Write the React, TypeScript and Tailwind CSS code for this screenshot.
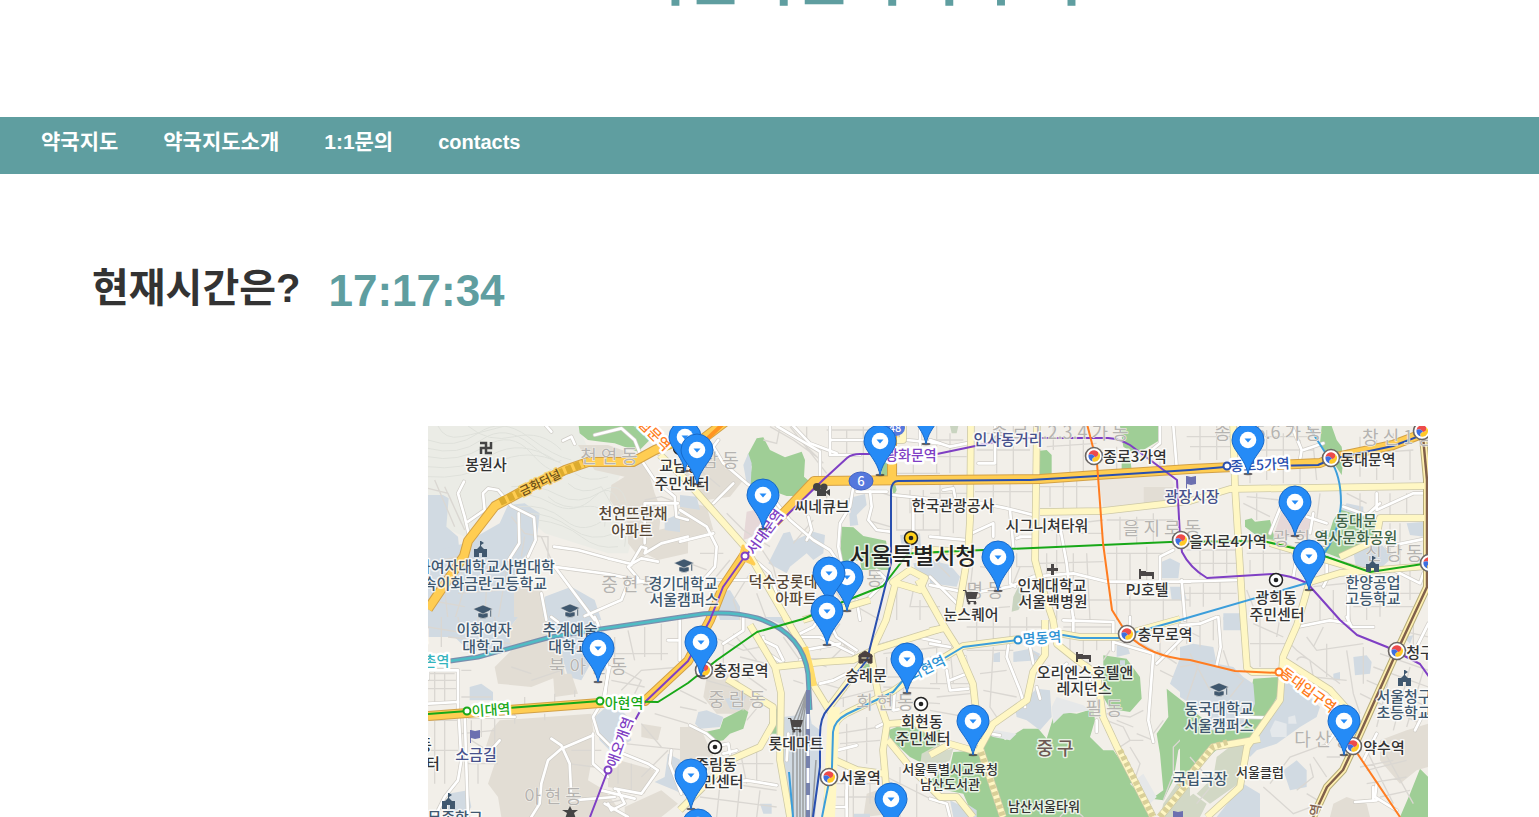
import React from 'react';

type Tile = {
  x: number;
  y: number;
  areas: [string, string][];
  lanes: string[];
  streets: string[];
};

const GREEN = '#9fce96';
const WATER = '#d1dae2';
const BLOCK = '#e2ddd4';
const HILL = '#ebece6';

const contours = [
  'M0 60Q80 90 150 40T300 50T430 120M0 110Q90 130 170 80T310 100T410 150M0 170Q100 180 200 130T400 130',
  'M240 230Q300 210 370 250T500 230T590 300M270 260Q350 250 410 300T540 290T590 380M330 300Q410 310 460 350T570 380',
  'M30 18Q50 60 100 50T230 18M420 190Q460 230 520 200L560 270M360 230Q400 270 470 260T530 320M0 85Q90 110 160 60T310 75T400 120M0 140Q100 155 190 105T380 120',
  'M300 280Q370 280 430 325T560 340M250 200Q330 190 390 225T520 215T600 280M440 160Q480 190 540 170M120 18Q180 70 260 50T400 90',
];

const tiles: Tile[] = [
  {
    x: 428,
    y: 420,
    areas: [
      [HILL, 'M0 18H450L500 130L580 160L560 200L600 260L620 330L600 400L540 400L350 340L240 240L110 350L0 300Z'],
      [BLOCK, 'M450 75L540 75L640 110L660 150L680 220L700 270L690 360L640 420L600 370L600 310L545 240L550 195L590 170L500 150Z'],
      [BLOCK, 'M690 330L780 310V400L690 420L650 400ZM255 500L340 500L360 600H255Z'],
      [GREEN, 'M452 18H680L665 60L630 95L560 70L520 65L480 60L455 40Z'],
      [WATER, 'M0 225H45L62 235L55 320L90 350L95 400H0Z'],
      [WATER, 'M240 255L290 250L335 280L325 370L305 395L270 430L258 520V600H0V400L110 370L215 310Z'],
      [WATER, 'M350 530L430 500L500 540L520 600H345ZM710 300L780 270V340L710 330Z'],
    ],
    lanes: [
      'M0 205L60 220L100 310M20 180L80 320M50 200L110 330M250 290L290 340L340 350L370 420M290 350L280 410M320 350L360 350V420',
      'M0 430L90 410L110 500L80 600M40 420L60 600M90 520L220 510M180 420L170 600M0 540L110 560M240 420L210 600',
      'M700 30L680 100L720 120M650 240L700 230L780 260',
    ],
    streets: [
      'M108 185L90 220L110 290L125 355', 'M120 305L170 270L165 220L180 205L210 210L250 258L318 292L323 360L300 410', 'M272 280L274 370L242 420',
      'M378 380L450 390L540 415L610 432L640 415L690 425', 'M610 435L600 440L630 475', 'M375 440L540 462L650 485', 'M380 440L440 520L500 600',
      'M470 588L580 540L600 490L650 485', 'M340 520L355 600', 'M405 62L430 50L440 72', 'M640 120L680 180L740 230L745 290L780 300', 'M610 430L640 380L655 385L650 400L700 370L780 350',
      'M650 370V250L750 250', 'M355 18L370 35', 'M500 45L580 25L620 60L640 110',
    ],
  },
  {
    x: 680,
    y: 420,
    areas: [
      [BLOCK, 'M0 90L100 100L190 180L150 230L80 240L0 170ZM0 240L80 260L100 330L0 370Z'],
      [GREEN, 'M230 55L250 52L270 90L315 112L365 95L375 120L372 170L390 185L340 228L320 228L270 210L208 200L215 140L203 105Z'],
      [GREEN, 'M485 320L520 322L550 348L618 362L632 450L545 450L540 420L480 430ZM604 60H625V168H604ZM635 190H645L650 210L640 230Z'],
      ['#e6d8d8', 'M200 275L245 265L250 340L190 360Z'],
      [WATER, 'M205 100L190 135L200 190L212 200L215 130ZM265 430L310 340L330 335L340 362L400 335L435 345L430 400L400 420L380 400L330 440L320 460ZM505 235L555 222L560 255L530 285L535 315L510 318ZM660 345L720 340L725 400L670 410ZM100 520L150 510L180 560L180 600H120ZM0 225L50 230L60 270L0 260ZM700 430L780 420V470L710 470Z'],
    ],
    lanes: [
      'M270 20L340 60L410 110M330 20L440 160M300 18L290 70L250 60M380 20V80L430 130M450 60H600M440 30H600M500 30V110M550 20V160',
      'M140 280L190 330L270 380M240 380L280 440L300 520M400 300L340 370M440 220V260L500 250M580 210L640 230M560 300L630 320',
      'M650 230V330H780M690 210V280M730 210V330M400 450L480 470M440 470L490 550M650 500V600M700 510L690 560H780M720 540V600M530 560L600 600M650 120V160H780M700 110V160M0 100L120 200M0 420L80 450',
      'M130 400L60 400M150 420L100 480M210 460L160 540L180 600M230 520L260 600',
    ],
    streets: [
      'M290 18L420 95V180', 'M340 18L390 70L470 100', 'M450 18V60H600M450 60V105H540', 'M115 60L100 80L130 130L200 190L290 250L330 300L400 360L450 390L470 420',
      'M160 190L100 250', 'M0 270L80 320L110 380L105 440L70 480M100 340L0 365', 'M520 200L510 260L480 310L475 380L495 480', 'M530 215H620', 'M570 215L575 260L565 300L590 330L630 335',
      'M385 290L395 330L380 360', 'M110 480H210', 'M230 425L270 460L290 520', 'M680 60L780 70', 'M640 225L780 240M700 240V330', 'M720 80V18', 'M590 450L620 480L550 550', 'M530 540L540 600',
    ],
  },
  {
    x: 930,
    y: 420,
    areas: [
      [BLOCK, 'M640 200H730V250H640Z'],
      ['#ebe7e0', 'M505 180L720 165L735 200H640V250L520 262Z'],
      [GREEN, 'M570 18H690V60L640 90L610 100L580 80ZM330 92L350 90L365 105V165H330ZM575 110L600 110L605 150H575Z'],
      ['#c9d4c0', 'M265 500L290 530L265 570L245 575L250 530ZM60 18H85L80 40H65Z'],
      [WATER, 'M0 420L60 435L90 470L80 500L0 490ZM685 430L720 415L750 430L745 475L690 475ZM720 500L760 500L770 540L725 540Z'],
    ],
    lanes: [
      'M20 18V160M60 40V160M100 60H0M0 110H110M150 40H300M140 90H300M200 18V160M250 18V170M350 80L500 70M370 18V90M420 60V170M460 60V170M560 80V150M690 100V150',
      'M0 220H110M30 195V350M70 195V340M135 215H310M190 195V280M240 190V300M330 200H500M360 200V260M400 180V270M440 180V270M530 300H730M570 290V360M620 290V370M670 280V365',
      'M10 420L60 470M130 420L120 510M150 440L240 450M260 400V440H310M350 400V480M380 390V600M430 400V600M470 400L480 600M530 400H700M560 380V600M600 400V600M650 380V500M330 430L520 425M330 540H540M700 500V600M550 540H780M120 570L240 560',
      'M340 330H410M380 310V380M440 310L520 300M450 340H520M270 440L250 490L280 500',
    ],
    streets: [
      'M0 60L60 80L110 70', 'M195 18V130L145 130', 'M130 245L230 265L310 285', 'M125 340L190 310V350', 'M240 270L250 380', 'M40 210L70 205L75 230',
      'M270 350H310M275 350L260 355', 'M390 320L410 430L430 600', 'M0 350L110 360', 'M0 495L120 520L240 500L310 470L430 460L530 485L780 485', 'M240 400L240 490L255 500', 'M690 480V410L730 390', 'M730 18L740 140M690 18V70L640 110', 'M755 480L765 600', 'M0 470L90 560',
    ],
  },
  {
    x: 1180,
    y: 420,
    areas: [
      [GREEN, 'M425 18H455L470 60L485 80L490 120L485 165L465 135L440 100L420 70ZM195 300L215 295L225 305L270 300L285 360L240 355L195 320ZM460 300L480 270L520 265L560 290L600 300L590 350L560 370L540 400L480 415L430 395Z'],
      ['#e6d8d8', 'M305 275L350 265L395 300L380 350L280 350Z'],
      [WATER, 'M485 270L500 250L550 260L550 290ZM520 395L600 370L640 410L590 455H530ZM680 310L735 305V350L690 345ZM130 580H180V600H130ZM0 490L10 490V540H0Z'],
      [BLOCK, 'M320 230L340 230V260H320Z'],
    ],
    lanes: [
      'M20 50H150M30 80H150M60 18V120M110 18V120M190 50H400M190 90H400M210 30V190M260 30V180M310 40V190M360 60V190M400 80L410 180M500 90L560 100L700 90M540 50V170M590 60V180M640 40V180M690 90V180',
      'M200 230L300 240M230 220V300M190 250L270 290M420 220L410 300M500 220L560 250M540 220V280M630 220V290M680 220V280M630 310V400M660 310V450',
      'M20 390H170M30 430H170M60 380V470M100 380V465M140 380V460M200 400H330M210 420V460M250 380V460M300 390V450M30 500V560M70 490V560M120 480V540M0 520H170M200 510L220 560M400 500L500 490L510 600M560 470V600M600 460V590M650 460V560M690 450V540M560 520H720M520 560H700M420 540V600M460 510V600',
    ],
    streets: [
      'M335 18L365 90L360 120', 'M370 90L430 70', 'M310 240L270 340', 'M440 410L440 480L430 500', 'M400 280L390 340M380 290L440 310', 'M590 220L590 270L700 220L740 220', 'M620 380L740 355', 'M0 485L180 480', 'M505 480V600', 'M640 450L720 490L730 460',
      'M340 470L350 410L330 390', 'M490 260L560 285L600 250', 'M735 18V60',
    ],
  },
  {
    x: 428,
    y: 617,
    areas: [
      [WATER, 'M0 0H270L240 40L250 90L220 110L120 100L80 60L0 60ZM345 0H500L510 100L460 190L420 180L400 110L350 60ZM305 160L350 135L375 150L370 180L310 190ZM125 210L160 200L195 225L195 250H125ZM500 300L540 265L580 280L600 300L610 370L550 405L515 370ZM215 440L240 430L285 445L280 470L225 485ZM60 530L120 520L130 570L110 600H60ZM720 410L780 440V540L740 520L680 495L710 480Z'],
      [BLOCK, 'M270 0H350L400 80L410 170L310 210L210 200L200 150L250 100L240 40ZM375 170L430 170L450 230L380 240ZM215 310L490 290L500 380L480 490L530 520L590 600H220L210 540L180 500L200 440L170 400L190 340ZM640 320L700 330L690 370L640 360ZM540 420L680 460L650 530L540 510ZM590 570L700 520L750 560L700 600H590Z'],
    ],
    lanes: [
      'M0 30L120 50M40 0V90M90 0L100 60M150 0V60M60 60L250 80M200 0L210 80M0 170H80M0 190H90M0 215H90M20 160V260M50 170V260M100 240H190M100 160H130M310 190L400 160M250 150L310 170',
      'M560 60V150M600 40L620 130M650 30V120M700 20V130M550 110H720M560 150L640 190L620 230M550 190L650 210M580 220L640 160L760 150M130 310V360M160 300V360M200 300V380M100 350L200 340M260 290V320M350 290V310M440 220V240M290 240V270M380 230V260',
      'M0 310H90M20 310V500M50 300V500M0 400H90M130 370L210 420M120 440H210M150 400V500M430 400H520M420 440L500 450M570 420V500M610 440V530M530 560L620 540M640 480L720 400M590 380L780 400M680 290L780 320M640 320L700 390',
    ],
    streets: [
      'M0 185V160H90V290M110 290L120 600', 'M92 290L100 430L90 490L50 540L20 600', 'M0 260L90 255', 'M500 0L510 20L540 160L530 250', 'M545 150L525 250L495 300L510 350L560 400L660 440L690 460L640 530L560 515', 'M370 365L400 385L425 440L430 540',
      'M495 355L400 395L360 430L340 500L335 560L310 600', 'M495 350L495 440L540 480', 'M430 550L560 540', 'M215 370L180 410', 'M125 300H260', 'M570 520L590 560L550 580L540 560', 'M520 520L620 545', 'M755 0V130', 'M720 70H750', 'M730 400L725 440L760 530', 'M370 0L390 15M530 560L600 600',
    ],
  },
  {
    x: 680,
    y: 617,
    areas: [
      [BLOCK, 'M80 180L160 170L220 250L200 290L110 290L70 240ZM0 330L60 330L110 440L60 480L0 440ZM560 530L620 510L640 590L550 600Z'],
      [GREEN, 'M75 345L120 335L130 305L190 275L205 285L190 335L150 350L130 370L100 375ZM285 275H290L290 350L255 350ZM625 340L650 330L780 335V410L730 440L690 420L630 365ZM535 140H572V160L545 155Z'],
      [WATER, 'M55 285L80 280L130 300L120 330L60 335L45 320ZM135 245L200 235L180 280L150 275ZM310 300L350 295L380 230L395 320L420 340V450L405 600H330L310 470ZM250 0H330L350 40ZM520 590H570V600H520ZM240 560H275V590H250Z'],
      ['#d4dac8', 'M725 410L780 380V480L720 450Z'],
    ],
    lanes: [
      'M100 60L190 100L240 90M180 120L260 140M130 80V150M160 50L230 130M80 190L220 230M190 170L260 220M250 250L200 310M170 200L190 280M0 220L80 260M0 270L50 280',
      'M310 60L360 130M340 190L370 200M440 30L520 110M480 20L420 100M500 80L450 130M390 130L440 150M430 200L500 220M460 250L580 220M490 240V270M540 240V270M590 180H700M620 120V180M670 130V230M610 110L780 90M610 210L780 215M630 250L780 260',
      'M470 350L600 330M480 380L600 370M500 320V440M560 300V440M460 500H600M470 540H600M520 460V600M570 460V560M170 440L280 440M180 400L200 500M230 400V500M80 490L290 520M60 540L290 570M120 500L110 600M180 500L170 600M240 520L230 600M620 480L780 560M660 450V600M710 500V600',
    ],
    streets: [
      'M190 0V40L130 80', 'M240 65L290 90L310 130', 'M330 40L360 60L420 60L520 110', 'M340 60L400 30L420 0M440 0L470 60L530 100', 'M370 100L480 80', 'M360 130H440', 'M420 200L460 190L520 160', 'M30 325L80 350L120 385L145 380L150 410', 'M130 410L170 400', 'M120 500L200 490L290 505', 'M260 110L290 170', 'M250 60V100L310 140', 'M470 400L530 385', 'M600 85L700 58L780 75', 'M590 330L610 320', 'M450 570H500V460', 'M500 600V520', 'M645 215L640 280L690 270',
      'M320 430L325 350',
    ],
  },
  {
    x: 930,
    y: 617,
    areas: [
      [GREEN, 'M175 350L210 350L225 370L280 335L325 335L350 365L370 300L400 285L440 290L490 275L495 310L480 360L520 400L550 400L620 500L660 600H210L170 450L160 380ZM520 115L590 125L630 180L635 245L600 285L540 275L520 240ZM710 215L780 270V360L745 400L730 490L700 550L665 545L700 520L690 410L680 350L715 300ZM70 405L160 400L225 600H130L100 530L0 510V490L60 450Z'],
      ['#d4dac8', 'M0 410L70 395L60 430L0 470Z'],
      ['#d2d8c5', 'M740 500L780 480V600H690L700 560Z'],
      [WATER, 'M250 105L300 95L330 110L325 130L250 135ZM190 110L210 105V135H190ZM255 275L320 215L360 220L365 300L330 340L290 310L260 300ZM560 85L590 80L600 110L560 120ZM720 200L755 110L780 100V250ZM110 560L140 580V600H100ZM60 550L100 570L110 600H70ZM570 130H585V145H570Z'],
      ['#e6e8e9', 'M600 500L640 470L680 540L660 560ZM365 270L380 240L460 265L480 280L400 290L370 320ZM170 350L200 340L260 350L240 370L190 360Z'],
    ],
    lanes: [
      'M0 120L60 130M20 90V200M60 90L70 200M110 100H250M190 90L180 270L200 300M150 170L230 160M160 220L260 240M110 30H350M140 0V80M190 0V70M240 0V70M290 0V60M300 100L340 130M400 30H550M420 60V100M460 60V110M500 60V100M540 100L520 130',
      'M530 290L600 300L640 280M530 310L580 330L600 370L640 370M560 310L610 330M600 370L570 390M620 350L670 370M680 100L740 140M690 160L730 180M600 60L670 100M640 60H780M690 50V120M740 40V100M670 350L700 310M600 390L630 440L610 500M0 200H120M20 240L120 230M0 280L110 300',
      'M390 600Q420 560 460 600M780 340L730 390L730 470L700 550',
    ],
    streets: [
      'M235 85L230 120L270 220L285 270', 'M300 90L310 140', 'M50 160L60 220L115 215', 'M60 190L110 170L105 120', 'M0 80L60 90', 'M430 0V60', 'M400 10L550 15V100', 'M550 75L670 110L655 310L670 375', 'M780 40L680 140M600 0V40', 'M410 140L380 165L370 175', 'M350 150L410 165', 'M320 210L330 245', 'M500 310L500 345', 'M0 545L50 560L60 600', 'M480 190V150L470 140', 'M180 350L210 355',
    ],
  },
  {
    x: 1180,
    y: 617,
    areas: [
      [GREEN, 'M220 185L300 180L295 250L230 380L130 380L30 470L0 500V250L100 330L200 290L210 240ZM720 455L745 480V600H660L690 530Z'],
      ['#d2d8c5', 'M110 420L175 370L200 395L175 500L90 560L50 530L100 480ZM0 560L40 530L80 560L60 600H0Z'],
      [WATER, 'M130 0H185V40H130ZM0 90L40 80L100 90L110 140L160 150L190 180L220 200L225 260L190 340L90 340L80 290L0 240ZM520 120L560 115L575 135L570 170L525 175ZM285 250L320 180L380 230L420 270L410 300L360 330L290 380L230 400L210 420L200 410ZM310 460L350 430L380 460V510L330 520ZM190 500L240 530L240 600H110L150 550ZM670 60L700 55L690 80ZM460 170L480 165L480 190H460Z'],
      [BLOCK, 'M600 370L680 340L745 320V450L710 460L660 500L600 430ZM460 560L500 540L560 560L570 600H450Z'],
      ['#e4e8eb', 'M270 340L285 310L320 320V360H275ZM325 300L345 295L350 320H325Z'],
    ],
    lanes: [
      'M0 30L60 60M20 0V80M60 10V90M100 0V70M220 20L310 60M210 80H320M240 0V150M300 0L290 60M320 70L350 100L480 200M350 130Q360 110 390 130L400 180M380 60L410 100L550 80M440 80V180M500 100L520 230L540 290M550 90V200M400 180L500 190M430 30L400 90',
      'M540 230L720 320M560 190L745 270M580 150L745 210M600 110L745 160M640 130L590 330M690 150L640 340M730 160L680 330M660 40L745 60M700 0V120',
      'M250 510L340 590L420 560M270 500L330 420L440 380M350 520L400 480L390 440M440 480L400 420M440 420H480M560 460L680 430M560 400L640 560M600 380L700 560M540 450L640 430M560 500L680 480M600 540L690 520M380 530L430 560M30 420L100 500L50 560M30 110L90 220M0 150L100 130M20 250L60 130M130 100L150 160L190 190L150 240',
    ],
    streets: [
      'M115 0L122 90L110 145', 'M500 0L515 30L580 30', 'M350 30L450 10L510 20', 'M745 20L705 100', 'M170 300L260 302', 'M590 350L550 430', 'M590 500L585 540L650 580', 'M525 555L590 550', 'M705 340L730 290', 'M0 25L60 20L110 0', 'M580 510V550', 'M470 340L440 380',
    ],
  },
];

const yellowRoads = [
  'M660 455L684 478L745 547L790 625', 'M971 420L970 520L968 553L957 620', 'M1037 420L1035 560L1043 590L1053 620L1057 644L1077 660L1097 674L1103 717L1117 747L1153 817',
  'M1040 512L1103 511L1190 501L1230 489L1428 486', 'M1233 420L1235 487L1242 600L1247 668L1252 672L1283 672', 'M1310 580L1297 625L1283 657L1280 700L1247 747L1240 787L1207 817',
  'M1283 660L1330 690L1357 720', 'M1307 583L1340 573L1428 566', 'M1428 518H1380L1376 540L1340 557', 'M1180 787L1213 747L1260 739', 'M1045 620L1045 655L1033 672L1027 700L993 724L980 748L1003 817',
  'M930 631L945 628L957 647L973 684L977 720L978 745', 'M775 667L823 662L853 660L876 649L940 629', 'M750 625L775 667L781 693L780 760L790 817', 'M785 617L803 647L813 684L827 707L837 720',
  'M727 679L773 707L773 724L760 747L730 760L680 810', 'M870 650L880 704L887 724L883 750L886 785', 'M834 714L826 817', 'M828 757L857 770L886 774', 'M887 724L913 722L935 735', 'M888 740L910 767L940 797L957 797L973 817',
  'M930 755L950 744L978 752', 'M895 585L886 620L872 650L827 710', 'M910 570L925 578L920 590L893 582Z', 'M912 552L935 550L968 552', 'M903 420V440L870 441', 'M1160 817L1190 780', 'M803 620L870 600', 'M918 580L945 628', 'M1270 543L1370 573',
  'M1180 619L1137 631L1120 637H1080L1063 634L1018 639L963 646L928 667L893 691L847 713Q834 720 833 732',
];

const orangeRoads = [
  'M428 609L464 556L468 541L495 506L530 487L565 470L588 462L633 462L655 450L680 440L700 441L725 422',
  'M428 716L600 703L645 701L688 661L710 620L723 587L743 557L777 520L814 481L1040 479L1097 475L1190 469L1320 463L1332 458L1393 445L1432 430',
  'M892 420V480',
];

const subway: [string, string][] = [
  ['#7f3fc4', 'M590 817L608 770L645 702L688 661L710 620L723 587L745 556L823 480L847 458Q852 454 860 454H937L980 445L1013 438H1108Q1120 439 1130 445L1177 480L1180 537L1182 552Q1190 568 1207 578L1273 574Q1290 575 1307 583L1340 620L1357 635L1387 647L1420 664L1430 678'],
  ['#18a818', 'M428 714L600 701L658 702L688 683L717 660L757 632L803 619L840 603L883 586L903 560Q906 553 915 553L1170 542L1263 541L1293 548L1327 557L1370 572L1430 563'],
  ['#294faf', 'M813 817L820 767V735Q820 717 828 709L867 660L891 563L891 490Q892 481 898 481L1030 480L1097 476L1190 470L1225 467L1318 465L1332 459L1393 446L1430 432'],
  ['#ff7d21', 'M1087 424L1097 463L1103 543L1112 610L1127 634Q1150 657 1190 660L1235 671L1280 673L1333 710L1353 747L1400 817'],
  ['#3c9edb', 'M1307 424L1330 460Q1341 475 1341 503Q1339 535 1322 556L1307 583L1180 620L1137 632L1120 638H1080L1063 635L1018 640L963 647L928 668L905 678L893 692L847 714Q834 721 833 732L832 767L822 817'],
];

const pins: [number, number][] = [
  [685, 437], [697, 450], [763, 495], [880, 441], [926, 410], [1248, 440], [1295, 502], [1309, 556], [998, 557], [847, 577],
  [829, 573], [827, 611], [598, 648], [701, 642], [907, 659], [973, 721], [1344, 721], [691, 775], [698, 825], [891, 799],
];

const districts: [string, number, number][] = [
  ['천 연 동', 609, 463], ['교 남 동', 710, 467], ['중 현 동', 630, 591], ['북 아 현 동', 588, 673], ['아 현 동', 553, 803], ['중 림 동', 737, 706],
  ['회 현 동', 885, 709], ['명 동', 985, 597], ['종 로 1.2.3.4 가 동', 1060, 439], ['을 지 로 동', 1162, 535], ['종 로 5.6 가 동', 1268, 439], ['창 신 1 동', 1398, 444],
  ['광 희 동', 1302, 545], ['신 당 동', 1394, 560], ['필 동', 1104, 715], ['다 산 동', 1323, 746], ['소 공 동', 854, 585],
];

type Tone = 'dark' | 'school' | 'brown' | 'green' | 'navy' | 'grey' | 'city';

const toneClass: Record<Tone, string> = {
  dark: 'fill-[#333333] text-[15px]',
  school: 'fill-[#40586f] text-[15px]',
  brown: 'fill-[#574838] text-[15px]',
  green: 'fill-[#3f6448] text-[15px]',
  navy: 'fill-[#46518c] text-[15px]',
  grey: 'fill-[#333333] text-[13px]',
  city: 'fill-[#222222] text-[23px]',
};

const places: [string, number, number, Tone][] = [
  ['봉원사', 486, 470, 'dark'], ['교남동', 680, 471, 'dark'], ['주민센터', 682, 489, 'dark'], ['천연뜨란채', 633, 519, 'brown'], ['아파트', 632, 536, 'brown'],
  ['이화여자대학교사범대학', 479, 572, 'school'], ['부속이화금란고등학교', 478, 589, 'school'], ['이화여자', 484, 635, 'school'], ['대학교', 483, 652, 'school'],
  ['추계예술', 570, 635, 'school'], ['대학교', 569, 652, 'school'], ['경기대학교', 683, 589, 'school'], ['서울캠퍼스', 684, 605, 'school'], ['덕수궁롯데', 783, 587, 'brown'],
  ['아파트', 796, 604, 'brown'], ['씨네큐브', 822, 512, 'dark'], ['한국관광공사', 953, 511, 'dark'], ['인사동거리', 1008, 445, 'navy'], ['종로3가역', 1135, 462, 'dark'],
  ['시그니쳐타워', 1047, 531, 'dark'], ['서울특별시청', 913, 564, 'city'], ['인제대학교', 1052, 591, 'dark'], ['서울백병원', 1053, 607, 'dark'], ['눈스퀘어', 971, 620, 'dark'],
  ['PJ호텔', 1147, 595, 'dark'], ['광장시장', 1192, 502, 'navy'], ['을지로4가역', 1228, 547, 'dark'], ['동대문역', 1368, 465, 'dark'], ['동대문', 1356, 526, 'green'],
  ['역사문화공원', 1356, 543, 'green'], ['한양공업', 1373, 588, 'school'], ['고등학교', 1373, 604, 'school'], ['광희동', 1276, 603, 'dark'], ['주민센터', 1277, 620, 'dark'],
  ['충무로역', 1165, 640, 'dark'], ['오리엔스호텔앤', 1085, 678, 'dark'], ['레지던스', 1084, 694, 'dark'], ['숭례문', 866, 681, 'dark'],
  ['회현동', 922, 727, 'dark'], ['주민센터', 923, 744, 'dark'], ['서울특별시교육청', 950, 774, 'grey'], ['남산도서관', 950, 789, 'grey'], ['남산서울타워', 1044, 811, 'grey'],
  ['충정로역', 741, 676, 'dark'], ['롯데마트', 796, 749, 'dark'], ['중림동', 716, 770, 'dark'], ['주민센터', 716, 787, 'dark'], ['서울역', 860, 783, 'dark'], ['소금길', 476, 760, 'navy'],
  ['무종학교', 455, 823, 'school'], ['동국대학교', 1219, 714, 'school'], ['서울캠퍼스', 1219, 731, 'school'], ['국립극장', 1200, 784, 'school'], ['서울클럽', 1260, 777, 'grey'],
  ['서울청구', 1404, 702, 'school'], ['초등학교', 1404, 718, 'school'], ['약수역', 1384, 753, 'dark'], ['청구역', 1427, 658, 'dark'], ['동', 425, 750, 'dark'], ['센터', 426, 769, 'dark'], ['원', 422, 642, 'dark'],
];

const lineLabels: [string, number, number, number, string][] = [
  ['서대문역', 765, 532, -54, '#7f3fc4'], ['광화문역', 911, 455, 0, '#7f3fc4'], ['애오개역', 620, 742, -70, '#7f3fc4'], ['이대역', 491, 710, -4, '#18a818'], ['아현역', 624, 703, 0, '#18a818'],
  ['종로5가역', 1260, 465, -3, '#294faf'], ['명동역', 1042, 638, -4, '#2a91d3'], ['회현역', 927, 668, -26, '#2a91d3'], ['동대입구역', 1308, 690, 36, '#ff7d21'], ['독립문역', 650, 430, 45, '#ff7d21'], ['신촌역', 430, 661, 0, '#35b4bd'],
];

const stops: [number, number, string][] = [
  [745, 556, '#7f3fc4'], [608, 770, '#7f3fc4'], [467, 711, '#18a818'], [600, 701, '#18a818'], [1227, 466, '#294faf'], [1018, 640, '#2a91d3'], [1279, 672, '#ff7d21'],
];

const transfers: [number, number][] = [[1094, 456], [1181, 540], [1331, 458], [1422, 431], [1127, 634], [704, 670], [829, 777], [1397, 651], [1353, 746], [1429, 563]];

const brownLine = 'M1422 426L1427 480V587L1413 617L1393 660L1357 740L1343 770L1327 787L1313 817';
const railLine = 'M450 661L478 657L551 637L601 629L688 616Q725 609 757 618Q803 633 808 674L810 710';

function Transfer({ x, y }: { x: number; y: number }) {
  return (
    <g transform={`translate(${x} ${y})`}>
      <circle r="8.500" fill="#fff" stroke="#6b6663" strokeWidth="1.6" />
      <path d="M-5.500 -1A5.500 5.500 0 0 1 4 -4Q5 1 1 1Q-1 -3 -5.500 -1Z" fill="#ed4b4b" />
      <path d="M-5.500 -1A5.500 5.500 0 0 0 -1 5.500Q-3 2 1 1Q-1 -3 -5.500 -1Z" fill="#3d6fe0" />
      <path d="M4 -4A5.500 5.500 0 0 1 -1 5.500Q-3 2 1 1Q5 1 4 -4Z" fill="#ffc928" />
    </g>
  );
}

function Pin({ x, y }: { x: number; y: number }) {
  return (
    <g transform={`translate(${x} ${y})`}>
      <ellipse cx="0" cy="34" rx="4.500" ry="1.200" fill="#38343a" opacity=".75" />
      <path d="M0 34C-2 24 -7 18 -11 12C-14 8 -16 4 -16 0A16 16 0 0 1 16 0C16 4 14 8 11 12C7 18 2 24 0 34Z" fill="#258bf6" stroke="#1769c9" strokeWidth="1" />
      <circle r="8.3" fill="#fff" />
      <path d="M-3.500 -1.500H3.500L0 2.500Z" fill="#258bf6" />
    </g>
  );
}

function Cap({ x, y }: { x: number; y: number }) {
  return (
    <g transform={`translate(${x} ${y})`} fill="#40586f" stroke="#f2efe9" strokeWidth=".5">
      <path d="M-5 1V5Q0 8 5 5V1Z" />
      <path d="M-10 -3L0 -7L10 -3L0 2Z" />
      <path d="M7 -2H8.500V5H7Z" />
    </g>
  );
}

function School({ x, y }: { x: number; y: number }) {
  return (
    <path transform={`translate(${x} ${y})`} fill="#40586f" d="M-6 7V-1L-3 -1L0 -4V-9H1L4 -7L1 -5V-4L4 -1H7V7H2V3H-1V7Z" />
  );
}

function Flag({ x, y }: { x: number; y: number }) {
  return <path transform={`translate(${x} ${y})`} d="M-5 -6H-4L0 -5L5 -6V2L0 3L-4 2V7H-5Z" fill="#6c70b0" />;
}

function Cart({ x, y }: { x: number; y: number }) {
  return (
    <g transform={`translate(${x} ${y})`} fill="#4b4747">
      <path d="M-8 -7H-5L-4 -5H7L5 2H-3L-2 4H5V5H-4L-6 -6H-8Z" />
      <circle cx="-2" cy="6" r="1.500" />
      <circle cx="4" cy="6" r="1.500" />
    </g>
  );
}

function Office({ x, y, fill }: { x: number; y: number; fill: string }) {
  return (
    <g transform={`translate(${x} ${y})`}>
      <circle r="6.5" fill={fill} stroke="#222" strokeWidth="1.5" />
      <circle r="2.3" fill="#222" />
    </g>
  );
}

function Bed({ x, y }: { x: number; y: number }) {
  return <path transform={`translate(${x} ${y})`} d="M-8 -5H-6V-3H-1V-2H7V5H5V2H-6V5H-8Z" fill="#4b4747" />;
}

function PharmacyMap() {
  return (
    <svg className="block h-full w-full font-['Noto_Sans_CJK_KR',sans-serif] font-normal" viewBox="428 426 1000 391" preserveAspectRatio="xMidYMin slice" role="img" aria-label="약국지도">
      <rect x="428" y="426" width="1000" height="391" fill="#f2efe9" />
      {tiles.map((t) => (
        <g key={`${t.x}-${t.y}`} transform={`translate(${t.x} ${t.y}) scale(.33333)`}>
          {t.areas.map(([fill, d]) => <path key={d} d={d} fill={fill} />)}
          {t.lanes.map((d) => <path key={d} d={d} fill="none" stroke="#dad7d2" strokeWidth="4" />)}
        </g>
      ))}
      <g transform="translate(428 420) scale(.33333)" fill="none" stroke="#dfe1db" strokeWidth="3">
        {contours.map((d) => <path key={d} d={d} />)}
      </g>
      {[['#cfccc6', 12], ['#ffffff', 8]].map(([color, width]) => (
        <g key={color} fill="none" stroke={String(color)} strokeWidth={width} strokeLinejoin="round" strokeLinecap="round">
          {tiles.map((t) => (
            <g key={`${t.x}-${t.y}`} transform={`translate(${t.x} ${t.y}) scale(.33333)`}>
              {t.streets.map((d) => <path key={d} d={d} />)}
            </g>
          ))}
        </g>
      ))}
      <g fill="none" strokeLinejoin="round">
        <g stroke="#cdc8a6" strokeWidth="7.5">{yellowRoads.map((d) => <path key={d} d={d} />)}</g>
        <path d={brownLine} stroke="#b7ad7b" strokeWidth="8" />
        <g stroke="#fff7c4" strokeWidth="6">{yellowRoads.map((d) => <path key={d} d={d} />)}</g>
        <path d="M834 707L829 817" stroke="#fff7c4" strokeWidth="12" />
        <g stroke="#d9cf98" strokeWidth="6" strokeDasharray="4 3">
          <path d="M981 752L1003 817M1120 750L1153 817M1180 787L1213 747L1230 741M1160 817L1190 780" />
        </g>
        <path d="M805 647L811 670L814 686" stroke="#ffdc69" strokeWidth="6" />
        <g stroke="#d3a146" strokeWidth="10">{orangeRoads.map((d) => <path key={d} d={d} />)}</g>
        <g stroke="#ffcd52" strokeWidth="8">{orangeRoads.map((d) => <path key={d} d={d} />)}</g>
        <path d="M743 546L740 558L754 564Z" stroke="#ffcd52" strokeWidth="3" />
        <path d="M500 502L521 492M558 474L584 463" stroke="#dcab2e" strokeWidth="8" strokeDasharray="6 3" />
        <path d="M706 440L725 422" stroke="#ff9422" strokeWidth="4" />
        <path d={brownLine} stroke="#fff0b0" strokeWidth="6" />
        <path d={brownLine} stroke="#80604b" strokeWidth="2.5" />
        <path d={railLine} stroke="#7a8fae" strokeWidth="5" />
        <path d={railLine} stroke="#4fbcc5" strokeWidth="2.5" />
        <g stroke="#9a9d9f" strokeWidth="1.5">
          <path d="M807 690L793 722V817M807 692L797 722V817M807 694L800 722V817M807 696L803 722V817M808 700L806 722V817M816 760L812 817" />
        </g>
        <path d="M808 690V817" stroke="#7681ac" strokeWidth="4" />
        <path d="M808 714V817" stroke="#fff" strokeWidth="3" strokeDasharray="15 12" />
        <path d="M789 772L793 817" stroke="#3c9edb" strokeWidth="2" />
        {subway.map(([color, d]) => <path key={color} d={d} stroke={color} strokeWidth="2" />)}
      </g>

      <g textAnchor="middle" className="fill-[#b5b3b0] text-[18px]" stroke="#f5f3ee" strokeWidth="1" paintOrder="stroke">
        {districts.map(([name, x, y]) => <text key={name} x={x} y={y}>{name}</text>)}
      </g>

      <g>
        <ellipse cx="861" cy="481" rx="12" ry="9" fill="#5578dd" stroke="#3f62c4" />
        <text x="861" y="486" textAnchor="middle" className="fill-white text-[13px] font-medium">6</text>
        <ellipse cx="895" cy="428" rx="10" ry="8" fill="#5578dd" />
        <text x="895" y="432" textAnchor="middle" className="fill-white text-[11px] font-medium">48</text>
      </g>

      {transfers.map(([x, y]) => <Transfer key={x} x={x} y={y} />)}
      <Cap x={483} y={612} /><Cap x={570} y={611} /><Cap x={684} y={566} /><Cap x={1219} y={690} />
      <School x={480} y={550} /><School x={1372} y={565} /><School x={1404} y={679} /><School x={448} y={802} />
      <Flag x={475} y={736} /><Flag x={1191} y={482} /><Flag x={1178} y={817} />
      <Cart x={971} y={597} /><Cart x={796} y={725} />
      <Bed x={1147} y={574} /><Bed x={1084} y={657} />
      <Office x={1276} y={580} fill="#fff" /><Office x={921} y={704} fill="#fff" /><Office x={715} y={747} fill="#fff" /><Office x={680} y={448} fill="#fff" /><Office x={911} y={538} fill="#ffd21c" />
      <path d="M1051 564H1054V568H1058V571H1054V575H1051V571H1047V568H1051Z" fill="#4b4747" />
      <path d="M480 443H486V453H492M481 454V448H491V442" fill="none" stroke="#444" strokeWidth="2.500" />
      <path d="M859 655L865 651L872 655V657H859ZM860 659H871V663H868V661H863V663H860ZM859 656H861V663H859ZM870 656H872V663H870Z" fill="#4b4040" stroke="#4b4040" />
      <path d="M570 806L572 810L578 810L574 813L576 819H565L567 813L562 810H568Z" fill="#444" />
      <g fill="#444">
        <circle cx="817" cy="487" r="4" /><circle cx="824" cy="487" r="3.500" /><rect x="817" y="489" width="9" height="7" /><path d="M825 492L830 489V496Z" />
      </g>

      <g textAnchor="middle" className="font-medium" stroke="#ffffff" strokeOpacity=".75" strokeWidth="3" strokeLinejoin="round" paintOrder="stroke">
        {places.map(([name, x, y, tone]) => <text key={`${name}-${x}-${y}`} x={x} y={y} className={toneClass[tone]}>{name}</text>)}
        <text x="1055" y="755" className="fill-[#6d5a55] text-[18px]">중 구</text>
        <text transform="translate(540 482) rotate(-26)" y="5" className="fill-[#6b4d18] text-[12px]" stroke="#ffcd52">금화터널</text>
        <text transform="translate(1315 810) rotate(-80)" y="5" className="fill-[#80604b] text-[13px]">역</text>
      </g>
      <g textAnchor="middle" className="text-[14px] font-medium" stroke="#ffffff" strokeWidth="5" strokeLinejoin="round" paintOrder="stroke">
        {lineLabels.map(([name, x, y, angle, color]) => (
          <text key={name} transform={`translate(${x} ${y}) rotate(${angle})`} y="5" fill={color}>{name}</text>
        ))}
      </g>
      {stops.map(([x, y, color]) => <circle key={x} cx={x} cy={y} r="3.500" fill="#fff" stroke={color} strokeWidth="2" />)}
      {pins.map(([x, y]) => <Pin key={x} x={x} y={y} />)}
    </svg>
  );
}

const links = ['약국지도', '약국지도소개', '1:1문의'];

export default function App() {
  return (
    <div className="flex h-screen flex-col overflow-hidden bg-white font-['Liberation_Sans','Noto_Sans_CJK_KR',sans-serif] font-bold">
      <header className="h-[117px] shrink-0 overflow-hidden pl-[634px]">
        <h1 className="-mt-[60px] whitespace-nowrap text-[59px] leading-[80px] text-[#5f9ea0]">약은사는사이가 자</h1>
      </header>
      <nav className="flex h-[57px] shrink-0 items-start gap-[45px] bg-[#5f9ea0] px-[41px] pt-2.5 text-[21px] leading-[30px] text-white">
        {links.map((label) => <a key={label} href="#map">{label}</a>)}
        <a href="#contacts" className="text-[20px]">contacts</a>
      </nav>
      <main className="flex min-h-0 flex-1 flex-col">
        <section className="flex h-[252px] shrink-0 items-start gap-7 pl-[92px] pt-[84px]">
          <h2 className="text-[40px] leading-[60px] text-[#333333]">현재시간은?</h2>
          <time className="text-[44px] leading-[66px] text-[#5f9ea0]">17:17:34</time>
        </section>
        <section id="map" className="ml-[428px] mr-[111px] min-h-0 flex-1 overflow-hidden">
          <PharmacyMap />
        </section>
      </main>
    </div>
  );
}
